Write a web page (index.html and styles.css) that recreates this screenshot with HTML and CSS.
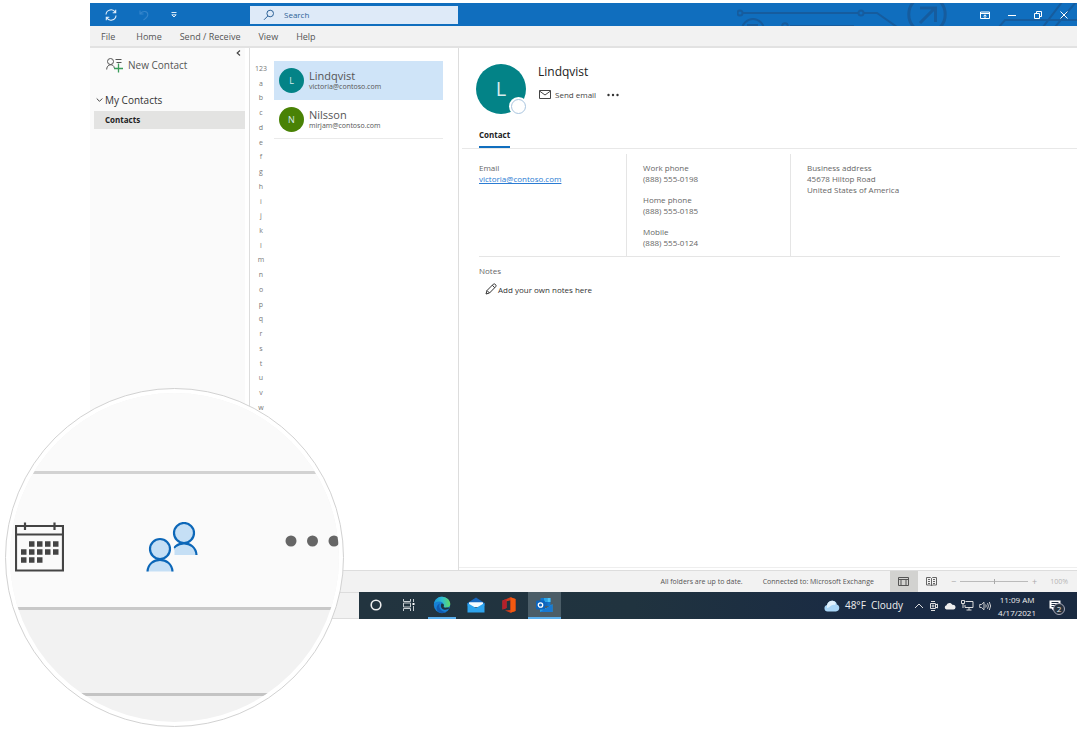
FILE: index.html
```html
<!DOCTYPE html>
<html lang="en">
<head>
<meta charset="utf-8">
<title>Contacts</title>
<link rel="stylesheet" href="styles.css">
</head>
<body>
<div class="page">
<div class="app">
  <header class="titlebar">
    <svg class="circuit" width="340" height="24" viewBox="738 3 340 24" fill="none" stroke="#165c9e" stroke-width="2" aria-hidden="true">
      <circle cx="741" cy="13" r="2.5"/><path d="M744 13H859M865 13H878L898 27M791 26H855"/><circle cx="862" cy="13" r="2.5"/>
      <circle cx="754" cy="30" r="11"/><path d="M748 25H758V30"/><circle cx="786" cy="26" r="2.8"/>
      <path d="M918 -1A18.500 18.500 0 0 0 917 29M938 -1A18.500 18.500 0 0 1 939 29" stroke-width="3"/>
      <path d="M921 23L936 8M921 8H936.500V22" stroke-width="3"/>
      <path d="M1000 27L1006 20H1078M1044 27L1063 2M1056 27L1077 2"/>
    </svg>
    <div class="quick">
      <button aria-label="Sync"><svg width="14" height="14" viewBox="0 0 14 14" fill="none" stroke="#e4effa" stroke-width="1.100"><path d="M2 6.500A5 5 0 0 1 11.400 4.500M12 7.500A5 5 0 0 1 2.600 9.500M11.700 1.800V4.800H8.700M2.300 12.200V9.200H5.300"/></svg></button>
      <button aria-label="Undo"><svg width="12" height="12" viewBox="0 0 12 12" fill="none" stroke="#3585cb" stroke-width="1.100"><path d="M2 1.500V5H5.500M2.300 4.700C5 1.300 9.500 2 9.800 5.500C10 8 8 9 5.500 11"/></svg></button>
      <button aria-label="Customize toolbar"><svg width="8" height="8" viewBox="0 0 8 8" fill="none" stroke="#dcebf8"><path d="M1.500 1.500H6.500M1.800 3.800H6.200L4 6Z"/></svg></button>
    </div>
    <label class="search">
      <svg width="12" height="12" viewBox="0 0 12 12" fill="none" stroke="#2d6297"><circle cx="7.200" cy="4.500" r="3.300"/><path d="M4.800 7L1 10.800"/></svg>
      <input type="text" placeholder="Search" aria-label="Search">
    </label>
    <div class="window">
      <button aria-label="Ribbon display options"><svg width="10" height="10" viewBox="0 0 10 10" fill="none" stroke="#fff"><path d="M.5 2H9.500V8.500H.5ZM.5 3.500H9.500M5 8V5M3.500 6.200L5 4.800L6.500 6.200"/></svg></button>
      <button aria-label="Minimize"><svg width="8" height="10" viewBox="0 0 8 10" stroke="#fff"><path d="M0 5.500H8"/></svg></button>
      <button aria-label="Restore"><svg width="8" height="8" viewBox="0 0 8 8" fill="none" stroke="#fff"><path d="M.5 2.500H5.500V7.500H.5ZM2.500 2V.5H7.500V5.500H6"/></svg></button>
      <button aria-label="Close"><svg width="8" height="8" viewBox="0 0 8 8" stroke="#fff"><path d="M.5.5L7.500 7.500M7.500.5L.5 7.500"/></svg></button>
    </div>
  </header>
  <nav class="menubar">
    <a href="#">File</a><a href="#">Home</a><a href="#">Send / Receive</a><a href="#">View</a><a href="#">Help</a>
  </nav>
  <div class="main">
    <aside class="sidebar">
      <button class="collapse" aria-label="Collapse pane"><svg width="5" height="6" viewBox="0 0 5 6" fill="none" stroke="#444" stroke-width="1.200"><path d="M4 .5L1.200 3L4 5.500"/></svg></button>
      <button class="new-contact">
        <svg width="18" height="16" viewBox="0 0 18 16" fill="none" stroke="#555"><circle cx="4.500" cy="4.500" r="3"/><path d="M.7 12.500C.7 6.500 8 6.500 8.300 11M9.500 2.500H15.500M10.500 5.500H15.500"/><path d="M12.500 6.500V15.500M8 11.500H17" stroke="#3a9c5a" stroke-width="1.300"/></svg>
        New Contact
      </button>
      <button class="group"><svg width="7" height="6" viewBox="0 0 7 6" fill="none" stroke="#444"><path d="M.7 1.500L3.500 4.300L6.300 1.500"/></svg>My Contacts</button>
      <a class="folder" href="#">Contacts</a>
    </aside>
    <section class="people">
      <nav class="index">
        <a href="#">123</a><a href="#">a</a><a href="#">b</a><a href="#">c</a><a href="#">d</a><a href="#">e</a><a href="#">f</a><a href="#">g</a><a href="#">h</a><a href="#">i</a><a href="#">j</a><a href="#">k</a><a href="#">l</a><a href="#">m</a><a href="#">n</a><a href="#">o</a><a href="#">p</a><a href="#">q</a><a href="#">r</a><a href="#">s</a><a href="#">t</a><a href="#">u</a><a href="#">v</a><a href="#">w</a><a href="#">x</a><a href="#">y</a><a href="#">z</a>
      </nav>
      <div class="list">
        <button class="person selected"><span class="avatar teal">L</span><span class="who"><span class="name">Lindqvist</span><span class="mail">victoria@contoso.com</span></span></button>
        <button class="person"><span class="avatar green">N</span><span class="who"><span class="name">Nilsson</span><span class="mail">mirjam@contoso.com</span></span></button>
      </div>
    </section>
    <section class="detail">
      <div class="card-head">
        <div class="portrait">L<span class="presence"></span></div>
        <div class="card-title">
          <h1>Lindqvist</h1>
          <div class="actions">
            <button><svg width="12" height="9" viewBox="0 0 12 9" fill="none" stroke="#444"><path d="M.5.5H11.500V8.500H.5ZM.5 1L6 5L11.500 1"/></svg>Send email</button>
            <button aria-label="More actions"><svg width="12" height="4" viewBox="0 0 12 4" fill="#333"><circle cx="1.500" cy="2" r="1.200"/><circle cx="6" cy="2" r="1.200"/><circle cx="10.500" cy="2" r="1.200"/></svg></button>
          </div>
        </div>
      </div>
      <div class="tabs"><button class="tab">Contact</button></div>
      <div class="fields">
        <dl><dt>Email</dt><dd><a href="#">victoria@contoso.com</a></dd></dl>
        <dl><dt>Work phone</dt><dd>(888) 555-0198</dd><dt>Home phone</dt><dd>(888) 555-0185</dd><dt>Mobile</dt><dd>(888) 555-0124</dd></dl>
        <dl><dt>Business address</dt><dd>45678 Hiltop Road</dd><dd>United States of America</dd></dl>
      </div>
      <div class="notes">
        <h2>Notes</h2>
        <button><svg width="12" height="12" viewBox="0 0 12 12" fill="none" stroke="#333"><path d="M1 11L2 7.500L8.300 1.200Q9.300.4 10.500 1.500Q11.500 2.700 10.700 3.700L4.500 10ZM2 7.500L4.500 10M7.300 2.200L9.700 4.700"/></svg>Add your own notes here</button>
      </div>
    </section>
  </div>
  <footer class="statusbar">
    <span>All folders are up to date.</span>
    <span>Connected to: Microsoft Exchange</span>
    <div class="views">
      <button class="active" aria-label="Normal view"><svg width="11" height="9" viewBox="0 0 11 9" fill="none" stroke="#555"><path d="M.5.5H10.500V8.500H.5ZM.5 2.500H10.500M3 2.500V8.500M8 2.500V8.500"/></svg></button>
      <button aria-label="Reading view"><svg width="11" height="10" viewBox="0 0 11 10" fill="none" stroke="#666"><path d="M.5.500H4.500L5.500 1.500L6.500.5H10.500V8H6.500L5.500 9L4.500 8H.5ZM5.500 1.500V9M2 2.500H4M2 4.500H4M2 6.500H4M7 2.500H9M7 4.500H9M7 6.500H9"/></svg></button>
    </div>
    <div class="zoom"><span>−</span><input type="range" min="0" max="100" value="50" aria-label="Zoom"><span>+</span></div>
    <span class="percent">100%</span>
  </footer>
  <footer class="taskbar">
    <input class="task-search" type="text" aria-label="Search Windows">
    <div class="pins">
      <button aria-label="Cortana"><svg width="12" height="12" viewBox="0 0 12 12" fill="none" stroke="#eee" stroke-width="1.600"><circle cx="6" cy="6" r="4.800"/></svg></button>
      <button aria-label="Task view"><svg width="13" height="12" viewBox="0 0 13 12" fill="none" stroke="#c8ced2"><path d="M1.500 0V2.500H8.500V0M1.500 12V9.500H8.500V12M1.500 4V8H8.500V4ZM11.500 0V3M11.500 7V12"/><path d="M10.500 5H12.500" stroke="#fff" stroke-width="2"/></svg></button>
      <button class="open" aria-label="Edge"><svg width="18" height="18" viewBox="0 0 18 18"><defs><linearGradient id="edge" x1="0" y1="0" x2="1" y2="0"><stop offset="0" stop-color="#1996d8"/><stop offset=".5" stop-color="#2fbcd0"/><stop offset="1" stop-color="#61dc64"/></linearGradient></defs><circle cx="9" cy="9" r="8.200" fill="#1680d4"/><path d="M.9 8C2 2.500 6 .7 9 .7C14 .7 17.300 4.500 17.300 8C17.300 11 14.500 12.200 12 11.700C10.500 11.300 10.700 10.500 11 9.500C11 7 8.500 5.500 6 5.500C3.500 5.500 1.700 6.500 .9 8Z" fill="url(#edge)"/><path d="M7 7.500C5 10 7 16 13.500 16C11 17.500 7.500 17.800 4.500 15C2.500 12 4 8.500 7 7.500Z" fill="#105ab0"/><path d="M8.500 7.500C7.500 9 7.500 12.500 10.500 13.500C13 14.300 15 13.300 16.500 12.300C17.500 10.800 12 12 11 11.500C10.200 11 11 9.700 11 9C10.500 8 9.700 7.500 8.500 7.500Z" fill="#20343f"/></svg></button>
      <button aria-label="Mail"><svg width="18" height="16" viewBox="0 0 18 16"><path d="M.5 6L9 .5L17.500 6V9H.5Z" fill="#1767bd"/><path d="M2 5.500H16V10H2Z" fill="#f5fbff"/><path d="M.5 6L9 11L17.500 6V15.500H.5Z" fill="#2ea4ed"/><path d="M2 5.500H16L9 10.500Z" fill="#f5fbff"/></svg></button>
      <button aria-label="Office"><svg width="14" height="16" viewBox="0 0 14 16"><path d="M.5 3.500L8.500.3L13.500 2V14L8.500 15.700L3 13.500L8.500 13V3.300L4.500 4.300V11L.5 12.500Z" fill="#d43d1b"/><path d="M8.500.3L13.500 2V14L8.500 15.700Z" fill="#f2590f"/><path d="M.5 3.500L4.500 2V11L.5 12.500Z" fill="#b5202c"/></svg></button>
      <button class="open current" aria-label="Outlook"><svg width="17" height="16" viewBox="0 0 17 16"><path d="M4.500 1H14.500V9H4.500Z" fill="#1276cd"/><path d="M8 1H11.500V5H8Z" fill="#29a3e6"/><path d="M11.500 1H14.500V5H11.500Z" fill="#4bc4f7"/><path d="M8 5H11.500V9H8Z" fill="#1468bd"/><path d="M4 7.500L10 11.500L16.500 7V15H4Z" fill="#249be4"/><path d="M4 15L16.500 7.500V15Z" fill="#1778d2"/><rect y="3.500" width="9" height="9" rx="1" fill="#0b64bd"/><circle cx="4.500" cy="8" r="2.200" fill="none" stroke="#fff" stroke-width="1.300"/></svg></button>
    </div>
    <div class="tray">
      <span class="weather"><svg width="16" height="12" viewBox="0 0 16 12"><path d="M3.500 11.500A3.300 3.300 0 0 1 3 5C4 1.500 7 .3 9.500 1C12 1.500 12.800 3.500 12.800 4.500A3.600 3.600 0 0 1 12 11.500Z" fill="#a9d6f7"/><path d="M3 5C4 1.500 7 .3 9.500 1C12 1.500 12 4 11 5C7 4 6 8 3 8Z" fill="#dff1fd"/></svg>48°F&nbsp; Cloudy</span>
      <svg width="10" height="8" viewBox="0 0 10 8" fill="none" stroke="#ddd"><path d="M1 6L5 2L9 6"/></svg>
      <svg width="10" height="12" viewBox="0 0 10 12" fill="none" stroke="#ddd"><path d="M1.500 3.500H6.500V8.500H1.500ZM6.500 5L8.500 4V8L6.500 7M2 1.500H6M2 10.500H6"/><circle cx="4" cy="6" r="1"/></svg>
      <svg width="12" height="8" viewBox="0 0 12 8"><path d="M2.500 7.500A2.200 2.200 0 0 1 2.500 3.200C3.500.5 7 .2 8.300 2.800C10.500 2.500 11.700 4 11.500 5.500Q11.300 7.500 9.500 7.500Z" fill="#eee"/></svg>
      <svg width="13" height="11" viewBox="0 0 13 11" fill="none" stroke="#ddd"><path d="M4.500 1.500H12V7.500H4V5M8 7.500V10M5.500 10H10.500M.5.500H3.500V3.500H.5ZM2 3.500V8"/></svg>
      <svg width="13" height="10" viewBox="0 0 13 10" fill="none" stroke="#ddd" stroke-width=".9"><path d="M.7 3.500H2.500L5 1.200V8.800L2.500 6.500H.7ZM6.700 3.500Q7.700 5 6.700 6.500M8.500 2.200Q10.300 5 8.500 7.800M10.300 1Q13 5 10.300 9"/></svg>
      <span class="clock"><span>11:09 AM</span><span>4/17/2021</span></span>
      <button class="alerts" aria-label="Notifications"><svg width="12" height="12" viewBox="0 0 12 12"><path d="M.5.5H11.500V8.500H4.500V11L2.500 8.500H.5Z" fill="#fff"/><path d="M2.500 2.500H9.500M2.500 4.500H9.500M2.500 6.500H6" stroke="#1a2a3f"/></svg><span class="badge">2</span></button>
    </div>
  </footer>
</div>
<div class="lens">
  <div class="glass">
    <div class="lens-top"></div>
    <nav class="lens-nav">
      <button aria-label="Calendar"><svg width="49" height="50" viewBox="0 0 49 50" fill="none" stroke="#444"><path d="M1 4H48V48.500H1ZM1 12.500H48M10 .5V8M39.500 .5V8" stroke-width="2.200"/><path d="M14 22H44" stroke-width="5.500" stroke-dasharray="5.500 2.500"/><path d="M6 30H44M6 38H28" stroke-width="5.500" stroke-dasharray="5.500 2.500"/></svg></button>
      <button aria-label="People"><svg width="53" height="50" viewBox="0 0 53 50" fill="#c5dff5" stroke="#0c67b8" stroke-width="2.200"><path d="M25.500 33C26.500 17.500 49.500 17.500 50.500 33"/><circle cx="38" cy="11" r="10"/><circle cx="14" cy="27" r="14" fill="#fafafa" stroke="none"/><path d="M27 26V34" stroke="#fafafa" stroke-width="3"/><path d="M1.500 49.500C2.500 34 25.500 34 26.500 49.500"/><circle cx="14" cy="27" r="10"/></svg></button>
      <button aria-label="More"><svg width="56" height="12" viewBox="0 0 56 12" fill="#666"><circle cx="6" cy="6" r="5.500"/><circle cx="27.500" cy="6" r="5.500"/><circle cx="49" cy="6" r="5.500"/></svg></button>
    </nav>
    <div class="lens-status"></div>
  </div>
</div>
</div>
</body>
</html>
```
FILE: styles.css
```css
* { box-sizing: border-box; }
body { margin: 0; background: #fff; font-family: "Open Sans", "Noto Sans", sans-serif; font-size: 8px; line-height: 11px; color: #666; }
button, input { font: inherit; color: inherit; border: 0; background: none; padding: 0; margin: 0; }
button { display: flex; align-items: center; }
a { color: inherit; text-decoration: none; }
svg { flex: none; display: block; }
h1, h2, dl, dd { margin: 0; font-weight: 400; }

.page { position: relative; min-height: 732px; padding: 3px 3px 0 90px; }
.app { display: flex; flex-direction: column; min-height: 616px; }

.titlebar { position: relative; display: flex; align-items: center; height: 23px; background: #106ebe; overflow: hidden; }
.circuit { position: absolute; right: 0; top: 0; }
.quick { width: 160px; padding-left: 14px; display: flex; align-items: center; gap: 20px; }
.search { width: 208px; height: 18px; padding-left: 13px; display: flex; align-items: center; gap: 9px; background: #deeaf8; color: #2d6297; }
.search input { flex: 1; min-width: 0; }
.search input::placeholder { color: #2d6297; opacity: 1; }
.window { position: relative; margin-left: auto; padding-right: 9px; display: flex; align-items: center; gap: 18px; }

.menubar { display: flex; align-items: center; gap: 18px; height: 22px; padding-left: 11px; background: #f2f2f2; border-bottom: 2px solid #e2e2e2; font-size: 9px; color: #555; }
.menubar a:first-child { margin-right: 3px; }

.main { flex: 1; display: flex; }
.sidebar { flex: none; width: 159px; border-right: 4px solid #fff; padding-left: 4px; background: #fafafa; display: flex; flex-direction: column; align-items: flex-start; }
.collapse { align-self: flex-end; margin-right: 4px; height: 10px; }
.new-contact { margin-left: 12px; gap: 4px; height: 14px; font-size: 10px; color: #555; }
.group { margin-top: 20px; padding-left: 2px; height: 16px; gap: 2px; font-size: 10px; color: #333; }
.folder { align-self: stretch; margin-top: 3px; height: 18px; line-height: 18px; padding-left: 11px; background: #e3e3e2; color: #222; font-weight: 700; }

.people { flex: none; width: 210px; display: flex; align-items: flex-start; padding: 13px 15px 0 0; border-left: 1px solid #ddd; border-right: 1px solid #ddd; }
.index { width: 24px; height: 398px; padding-right: 2px; display: grid; grid-auto-rows: 1fr; justify-items: center; align-items: center; font-size: 7px; color: #777; }
.list { flex: 1; }
.person { width: 100%; height: 39px; padding-left: 5px; gap: 5px; text-align: left; border-bottom: 1px solid #eaeaea; }
.selected { background: #cfe4f8; border-color: #cfe4f8; }
.avatar { width: 25px; height: 25px; border-radius: 50%; color: #d8ecec; font-size: 9px; line-height: 25px; text-align: center; }
.teal { background: #038387; }
.green { background: #498205; }
.who { display: flex; flex-direction: column; padding-top: 2px; color: #555; }
.name { font-size: 11px; line-height: 12px; }
.mail { font-size: 7px; line-height: 10px; }

.detail { flex: 1; min-width: 0; border-bottom: 1px solid #eee; margin-bottom: 2px; }
.card-head { display: flex; gap: 12px; padding: 16px 0 0 17px; }
.portrait { position: relative; width: 50px; height: 50px; border-radius: 50%; background: #038387; color: #d8ecec; font-size: 20px; line-height: 50px; text-align: center; }
.presence { position: absolute; right: 0; bottom: 0; width: 15px; height: 15px; border-radius: 50%; background: #fff; border: 1px solid #a9c5df; box-shadow: 0 0 0 2px #fff; }
.card-title h1 { font-size: 12px; line-height: 16px; color: #222; }
.actions { display: flex; gap: 11px; margin-top: 9px; padding-left: 1px; color: #444; }
.actions button { gap: 4px; }
.tabs { margin-left: 3px; padding-left: 17px; border-bottom: 1px solid #e8e8e8; }
.tab { margin-top: 15px; height: 19px; padding-bottom: 6px; border-bottom: 2px solid #106ebe; color: #222; font-weight: 700; }
.fields { display: grid; grid-template-columns: 147px 164px 1fr; margin: 5px 17px 0 20px; border-bottom: 1px solid #e5e5e5; }
.fields dl { padding: 8px 0 8px 16px; border-left: 1px solid #e5e5e5; }
.fields dl:first-child { padding-left: 0; border-left: 0; }
.fields dd + dt { margin-top: 10px; }
.fields a { color: #2b7cd3; text-decoration: underline; }
.notes { padding: 8px 20px; }
.notes h2 { font-size: 8px; line-height: 12px; }
.notes button { margin: 6px 0 0 6px; gap: 1px; color: #333; }

.statusbar { display: flex; align-items: center; justify-content: flex-end; gap: 20px; height: 22px; background: #f2f2f2; border-top: 1px solid #ddd; font-size: 7px; color: #555; padding-right: 9px; }
.views { display: flex; align-self: stretch; margin-left: -4px; }
.views button { width: 28px; justify-content: center; }
.views .active { background: #d2d2d0; }
.zoom { display: flex; align-items: center; gap: 4px; margin-left: -15px; font-size: 9px; color: #aaa; }
.zoom input { appearance: none; width: 68px; height: 5px; background: linear-gradient(#bbb, #bbb) center / 100% 1px no-repeat; }
.zoom input::-webkit-slider-thumb { appearance: none; width: 1px; height: 5px; background: #aaa; }
.percent { color: #b5b5b5; margin-left: -7px; }

.taskbar { display: flex; align-items: stretch; height: 27px; background: linear-gradient(90deg, #22343f 269px, #20333f 55%, #192a44 80%, #1a2a40); color: #eee; }
.task-search { width: 269px; background: #f2f2f2; border-top: 1px solid #ddd; border-bottom: 1px solid #ddd; }
.pins { display: flex; }
.pins button { width: 33px; justify-content: center; border-bottom: 2px solid transparent; }
.pins .open { width: 28px; margin: 0 3px; border-color: #5bb0ee; }
.pins .current { width: 33px; background: #4b5d67; margin-right: 0; }
.tray { margin-left: auto; display: flex; align-items: center; gap: 5px; padding-right: 11px; }
.weather { display: flex; align-items: center; gap: 5px; font-size: 10px; margin-right: 6px; }
.clock { display: flex; flex-direction: column; align-items: center; line-height: 13px; margin-left: 1px; }
.alerts { position: relative; margin-left: 8px; margin-right: 5px; }
.badge { position: absolute; left: 4px; top: 3px; width: 12px; height: 12px; border-radius: 50%; background: #26323f; border: 1px solid #aab; line-height: 10px; text-align: center; }

.lens { position: absolute; left: 5px; top: 388px; width: 339px; height: 339px; border-radius: 50%; border: 1px solid #d2d2d2; padding: 4px; background: #fff; }
.glass { height: 100%; border-radius: 50%; overflow: hidden; display: flex; flex-direction: column; background: #f2f2f2; }
.lens-top { height: 78px; background: #fafafa; }
.lens-nav { display: flex; align-items: center; height: 139px; padding-left: 5px; background: #fafafa; border-top: 3px solid #d2d2d2; border-bottom: 3px solid #c8c8c8; }
.lens-nav button { flex: none; margin-right: 82px; margin-top: 12px; }
.lens-nav button:last-child { margin: 0 0 0 4px; }
.lens-status { height: 86px; border-bottom: 3px solid #c4c4c4; }
```
